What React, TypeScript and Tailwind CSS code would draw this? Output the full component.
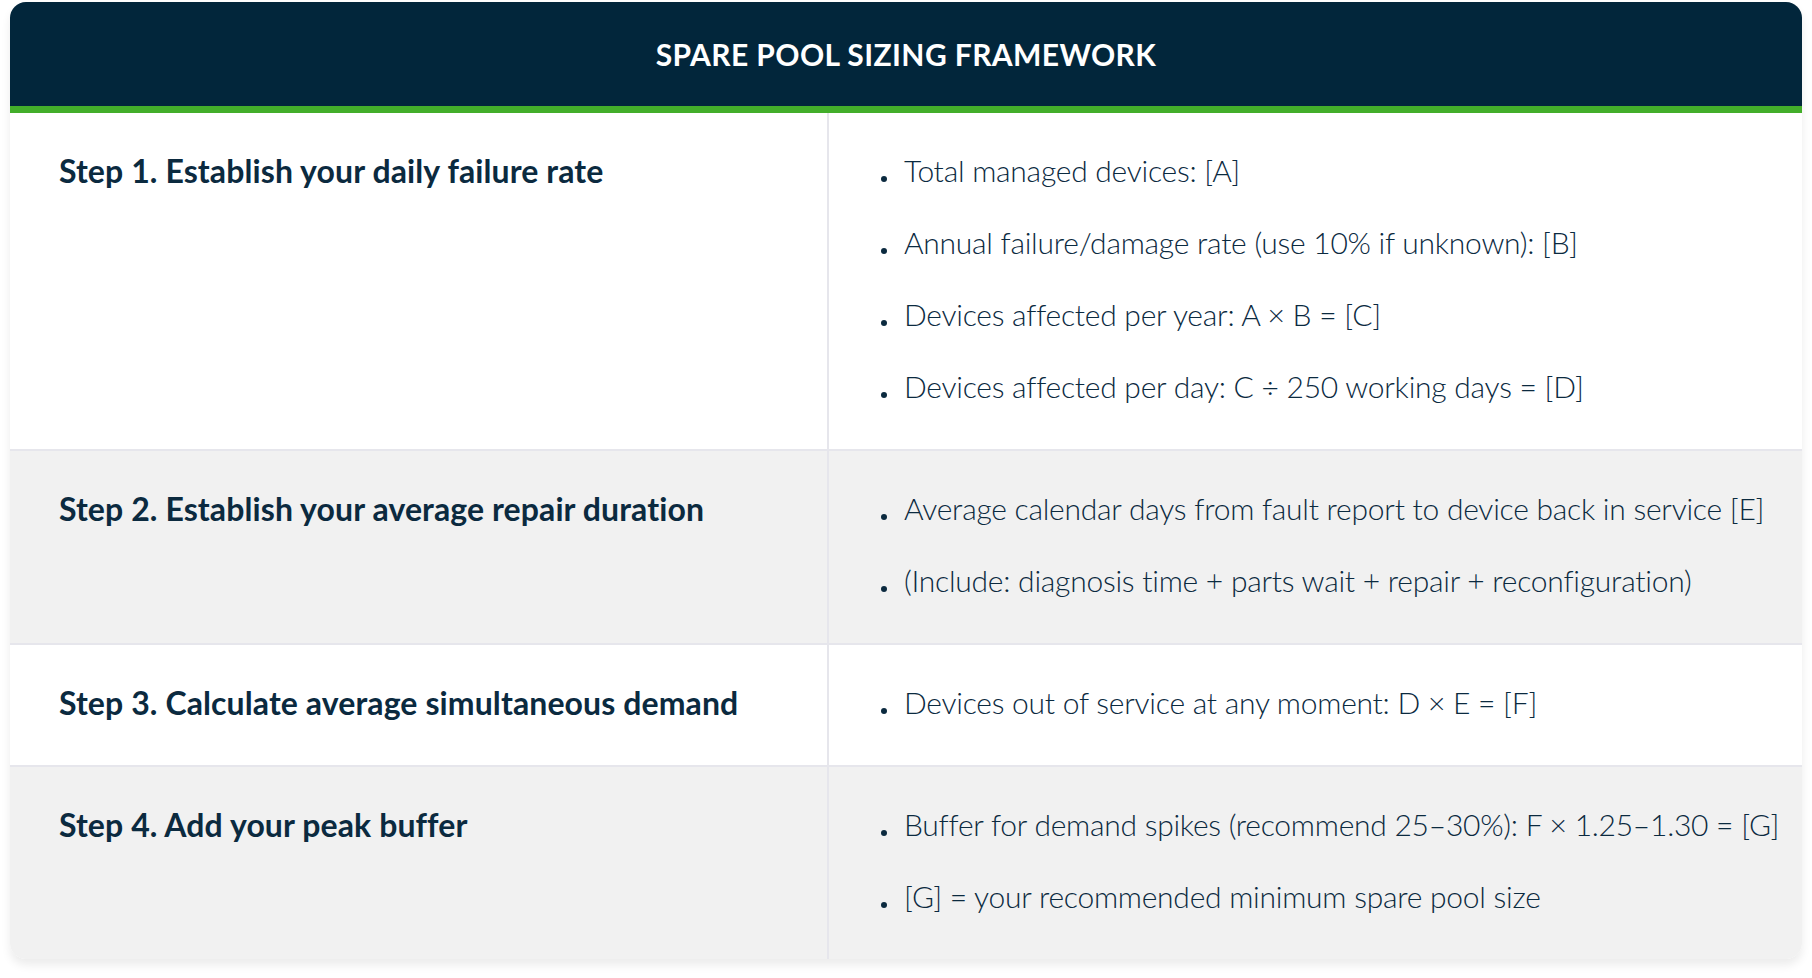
import React from 'react';

// ── Framework rows ────────────────────────────────────────────────────────────
const STEPS: { title: string; items: string[]; shaded: boolean }[] = [
  {
    title: 'Step 1. Establish your daily failure rate',
    items: [
      'Total managed devices: [A]',
      'Annual failure/damage rate (use 10% if unknown): [B]',
      'Devices affected per year: A × B = [C]',
      'Devices affected per day: C ÷ 250 working days = [D]',
    ],
    shaded: false,
  },
  {
    title: 'Step 2. Establish your average repair duration',
    items: [
      'Average calendar days from fault report to device back in service [E]',
      '(Include: diagnosis time + parts wait + repair + reconfiguration)',
    ],
    shaded: true,
  },
  {
    title: 'Step 3. Calculate average simultaneous demand',
    items: ['Devices out of service at any moment: D × E = [F]'],
    shaded: false,
  },
  {
    title: 'Step 4. Add your peak buffer',
    items: [
      'Buffer for demand spikes (recommend 25–30%): F × 1.25–1.30 = [G]',
      '[G] = your recommended minimum spare pool size',
    ],
    shaded: true,
  },
];

function StepRow({ title, items, shaded, last }: { title: string; items: string[]; shaded: boolean; last: boolean }) {
  return (
    <div
      className={`flex ${shaded ? 'bg-[#f1f1f1]' : 'bg-white'} ${last ? '' : 'border-b-2 border-[#e6e6ec]'}`}
    >
      {/* Step label */}
      <div className="w-[817px] flex-shrink-0 pl-[49px] pt-[22px] pb-[26px]">
        <p className="h-[72px] flex items-center text-[32px] font-bold tracking-[0.1px] text-[#0b2a3f]">{title}</p>
      </div>

      {/* Bullet list */}
      <div className="flex-1 border-l-2 border-[#e6e6ec] pl-[52px] pt-[21px] pb-[27px]">
        {items.map((item) => (
          <div key={item} className="h-[72px] flex items-center">
            <span className="mr-[17px] mt-[17px] h-[6px] w-[6px] flex-shrink-0 rounded-full bg-[#0b2a3f]" />
            <span className="text-[30px] font-light tracking-[-0.25px] text-[#0b2a3f]">{item}</span>
          </div>
        ))}
      </div>
    </div>
  );
}

export default function App() {
  return (
    <div className="min-h-screen bg-white pl-[10px] pr-[10px] pt-[2px] font-['Lato',sans-serif]">
      <div className="overflow-hidden rounded-[16px] bg-white shadow-[0_6px_10px_rgba(0,0,0,0.08)]">
        {/* Header */}
        <div className="flex h-[104px] items-center justify-center bg-[#02263b]">
          <h1 className="text-[30px] font-bold uppercase tracking-[0.4px] text-white">Spare Pool Sizing Framework</h1>
        </div>
        <div className="h-[7px] bg-[#43ae2a]" />

        {STEPS.map((s, i) => (
          <StepRow key={s.title} title={s.title} items={s.items} shaded={s.shaded} last={i === STEPS.length - 1} />
        ))}
      </div>
    </div>
  );
}
